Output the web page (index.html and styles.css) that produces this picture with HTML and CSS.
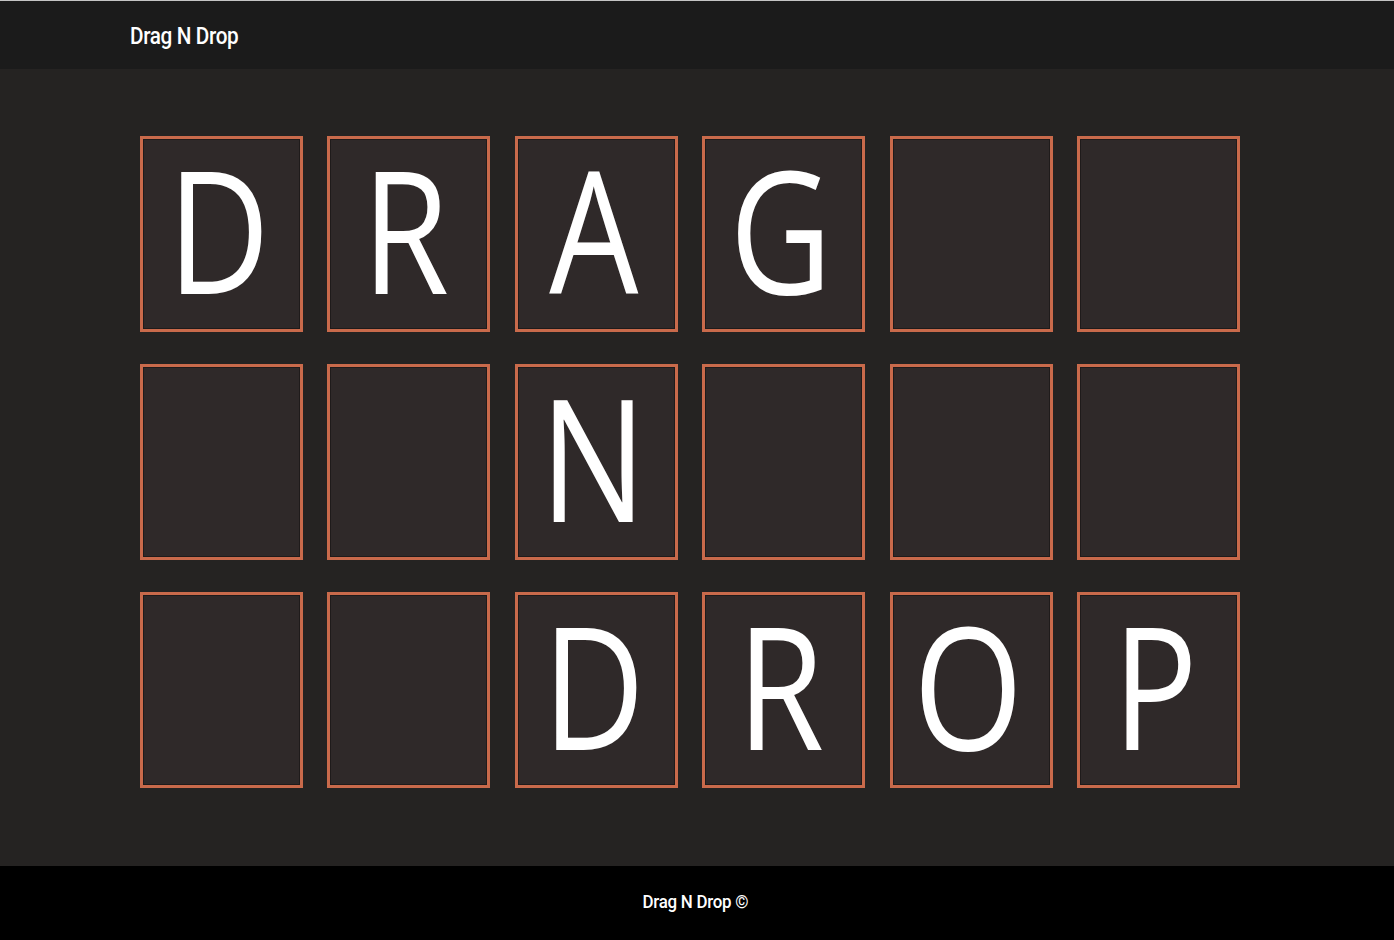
FILE: index.html
```html
<!DOCTYPE html>
<html>
<head>
<meta charset="utf-8">
<link rel="stylesheet" href="styles.css">
</head>
<body>
<header class="topbar"><span class="brand">Drag N Drop</span></header>
<main class="board">
  <div class="grid">
    <div class="cell"><span class="letter">D</span></div>
    <div class="cell"><span class="letter">R</span></div>
    <div class="cell"><span class="letter">A</span></div>
    <div class="cell"><span class="letter">G</span></div>
    <div class="cell"></div>
    <div class="cell"></div>
    <div class="cell"></div>
    <div class="cell"></div>
    <div class="cell"><span class="letter">N</span></div>
    <div class="cell"></div>
    <div class="cell"></div>
    <div class="cell"></div>
    <div class="cell"></div>
    <div class="cell"></div>
    <div class="cell"><span class="letter">D</span></div>
    <div class="cell"><span class="letter">R</span></div>
    <div class="cell"><span class="letter">O</span></div>
    <div class="cell"><span class="letter">P</span></div>
  </div>
</main>
<footer class="footer"><span class="foot-text">Drag N Drop ©</span></footer>
</body>
</html>
```
FILE: styles.css
```css
html, body {
  margin: 0;
  padding: 0;
}
body {
  background: #252322;
  font-family: "Liberation Sans", Arial, sans-serif;
  color: #fff;
  width: 1394px;
  height: 940px;
  display: flex;
  flex-direction: column;
  overflow: hidden;
}
.topbar {
  height: 68px;
  border-top: 1px solid #c4c4c4;
  background: #1b1b1b;
  display: flex;
  align-items: center;
  padding-left: 130px;
  box-sizing: content-box;
}
.brand {
  font-family: Roboto, "Liberation Sans", sans-serif;
  font-weight: 500;
  font-size: 23px;
  letter-spacing: -0.4px;
  display: inline-block;
  transform: scaleX(0.9);
  transform-origin: left center;
  margin-top: 2px;
}
.board {
  flex: 1;
  padding-top: 67px;
  padding-left: 140px;
  box-sizing: border-box;
}
.grid {
  display: grid;
  grid-template-columns: repeat(6, 163px);
  grid-auto-rows: 196px;
  column-gap: 24.4px;
  row-gap: 32px;
}
.cell {
  background: #2f2929;
  border: 3px solid #c96a4b;
  box-shadow: inset 0 0 0 1px #1f1b1b;
  box-sizing: border-box;
  display: flex;
  align-items: center;
  justify-content: center;
}
.letter {
  font-family: "Open Sans", "Liberation Sans", sans-serif;
  font-size: 170px;
  line-height: 1;
  display: inline-block;
  transform: scaleX(0.83);
  margin-left: -6px;
  margin-top: -12px;
}
.footer {
  height: 74px;
  background: #000;
  display: flex;
  align-items: center;
  justify-content: center;
}
.foot-text {
  font-family: Roboto, "Liberation Sans", sans-serif;
  font-weight: 500;
  font-size: 19px;
  letter-spacing: -0.3px;
  display: inline-block;
  transform: scaleX(0.89);
  margin-left: -3px;
  margin-top: -3px;
}
```
